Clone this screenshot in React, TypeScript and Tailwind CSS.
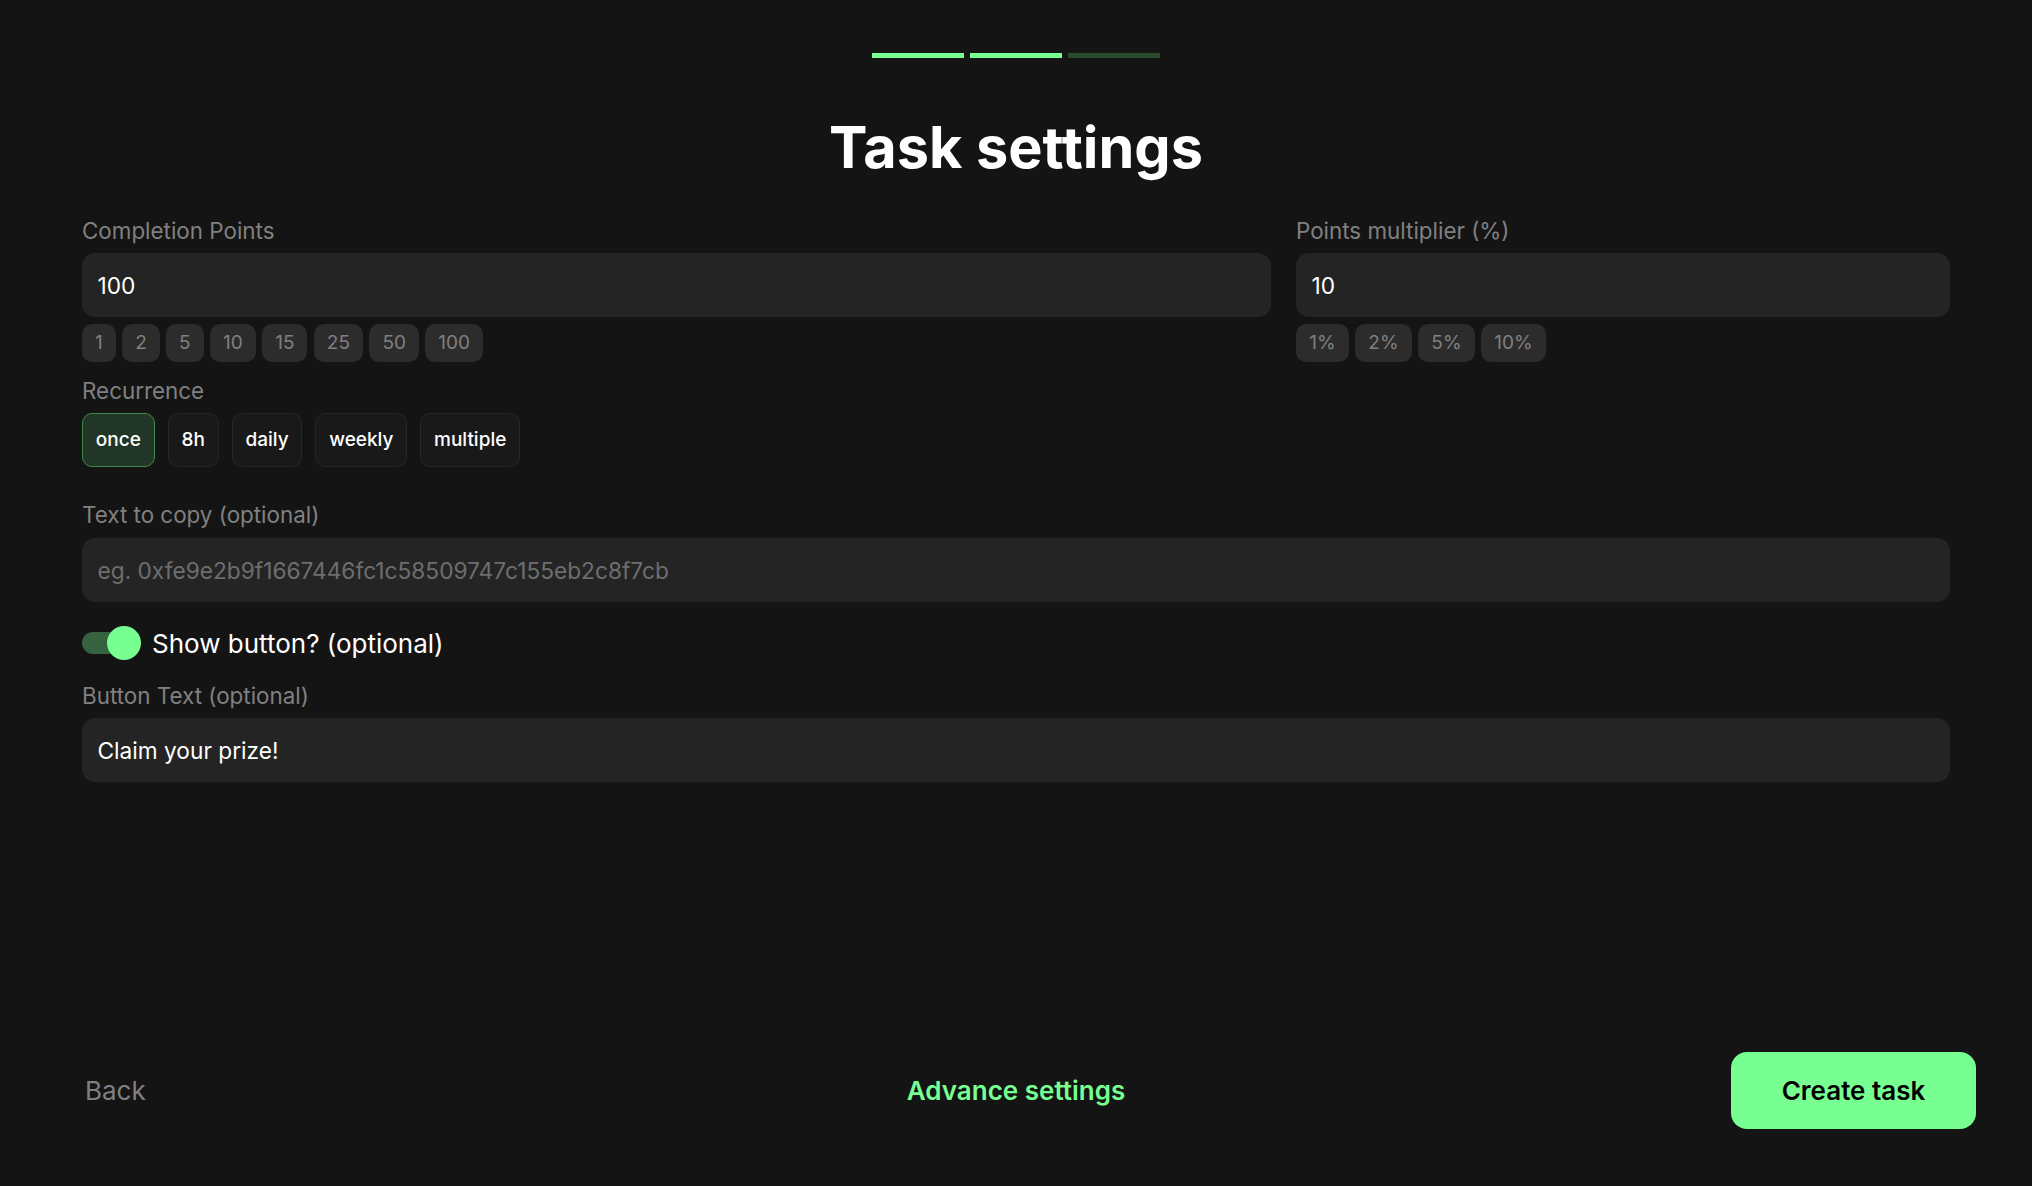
const completion = ["1", "2", "5", "10", "15", "25", "50", "100"];
const multiplier = ["1%", "2%", "5%", "10%"];
const recurrence = ["once", "8h", "daily", "weekly", "multiple"];

const Label = ({ children }: { children: string }) => (
  <label className="block h-[30px] text-[22.4px] leading-[30px] text-[#808080]">{children}</label>
);

const Field = ({ value, placeholder }: { value?: string; placeholder?: string }) => (
  <input
    readOnly
    value={value}
    placeholder={placeholder}
    className="mt-[7px] block h-[64px] w-full rounded-[13px] bg-[#242424] px-[15.5px] pt-px text-[22.7px] text-white outline-none placeholder:text-[#6e6e6e]"
  />
);

const Chips = ({ items, wide }: { items: string[]; wide?: boolean }) => (
  <div className="mt-[7px] flex gap-[6.4px]">
    {items.map((item) => (
      <button
        key={item}
        className={
          wide
            ? "h-[38px] rounded-[10px] bg-[#2c2c2c] px-[13.2px] text-[19px] text-[#808080]"
            : "h-[38px] rounded-[10px] bg-[#2c2c2c] px-[13px] text-[19px] text-[#808080]"
        }
      >
        {item}
      </button>
    ))}
  </div>
);

export default function App() {
  return (
    <div className="flex h-[1186px] flex-col bg-[#141414] font-['Inter',sans-serif]">
      <div className="mt-[53px] flex justify-center gap-[6px]">
        <div className="h-[5px] w-[92px] bg-[#78ff92]" />
        <div className="h-[5px] w-[92px] bg-[#78ff92]" />
        <div className="h-[5px] w-[92px] bg-[#2a4a30]" />
      </div>

      <h1 className="mt-[53px] h-[72px] text-center text-[57.6px] leading-[72px] font-bold text-white">Task settings</h1>

      <div className="mt-[33px] px-[82px]">
        <div className="flex gap-[25px]">
          <div className="flex-1">
            <Label>Completion Points</Label>
            <Field value="100" />
            <Chips items={completion} />
          </div>
          <div className="w-[654px]">
            <Label>Points multiplier (%)</Label>
            <Field value="10" />
            <Chips items={multiplier} wide />
          </div>
        </div>

        <div className="mt-[14px]">
          <Label>Recurrence</Label>
          <div className="mt-[7px] flex gap-[13px]">
            {recurrence.map((item) => (
              <button
                key={item}
                className={
                  item === "once"
                    ? "h-[54px] rounded-[10px] border border-[#3f8a4e] bg-[#213626] px-[12.8px] text-[19px] font-[450] text-white"
                    : "h-[54px] rounded-[10px] border border-[#262626] bg-[#191919] px-[12.8px] text-[19px] font-[450] text-white"
                }
              >
                {item}
              </button>
            ))}
          </div>
        </div>

        <div className="mt-[33px]">
          <Label>Text to copy (optional)</Label>
          <div className="pt-px">
            <Field placeholder="eg. 0xfe9e2b9f1667446fc1c58509747c155eb2c8f7cb" />
          </div>
        </div>

        <div className="mt-[24px] flex h-[34px] items-center gap-[12px]">
          <div className="relative h-[22px] w-[52px] rounded-full bg-[#35633f]">
            <div className="absolute top-[-6px] right-[-7px] h-[34px] w-[34px] rounded-full bg-[#78ff92]" />
          </div>
          <span className="ml-[6px] text-[26px] text-white">Show button? (optional)</span>
        </div>

        <div className="mt-[21px]">
          <Label>Button Text (optional)</Label>
          <Field value="Claim your prize!" />
        </div>
      </div>

      <div className="mt-auto mb-[57px] flex items-center justify-between pr-[56px] pl-[85px]">
        <button className="w-[216px] text-left text-[26px] text-[#808080]">Back</button>
        <button className="text-[26px] font-semibold text-[#78ff92]">Advance settings</button>
        <button className="h-[77px] w-[245px] rounded-[16px] bg-[#78ff92] text-[26px] font-semibold text-black">
          Create task
        </button>
      </div>
    </div>
  );
}
